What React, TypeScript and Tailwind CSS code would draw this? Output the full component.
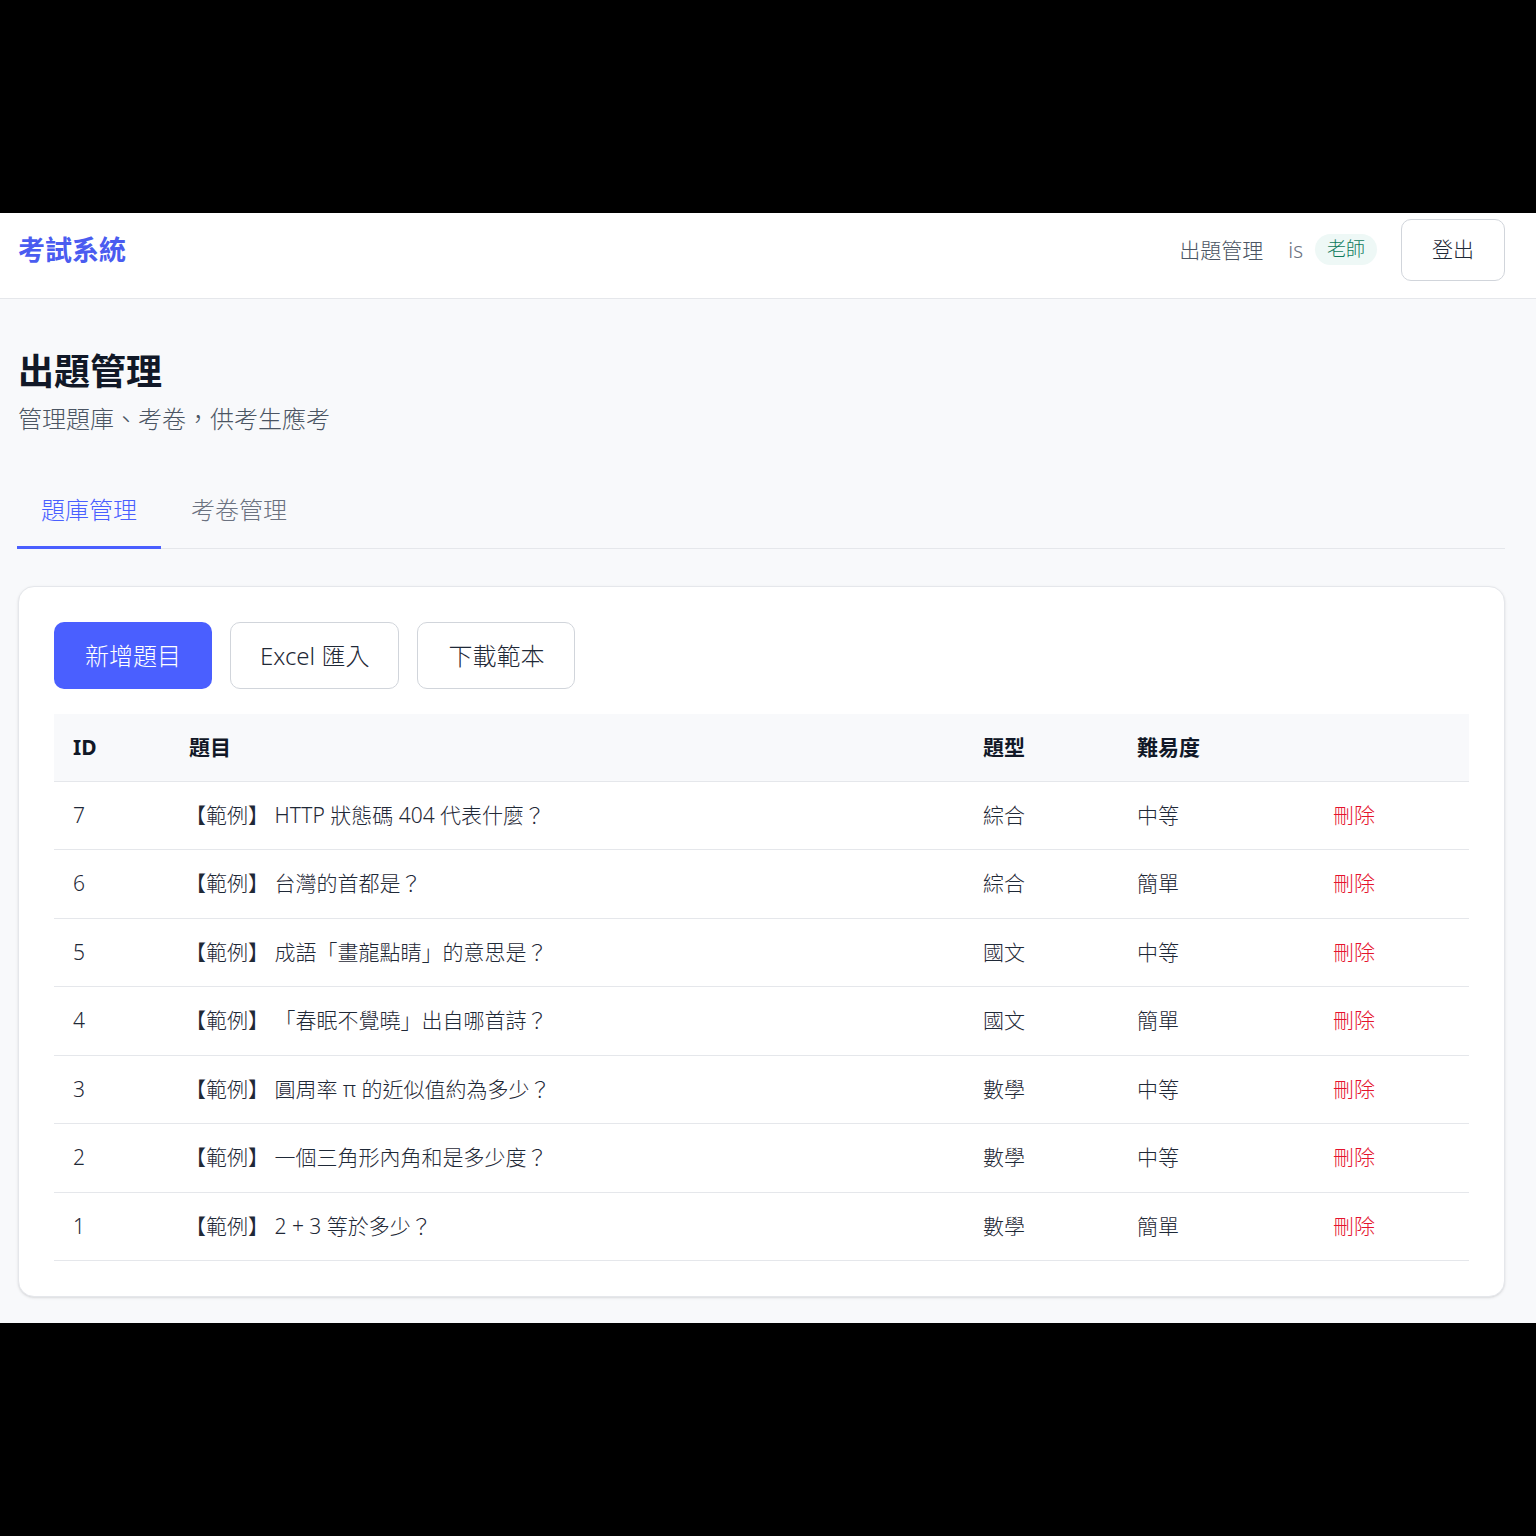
const FONT = {
  fontFamily: '"Segoe UI", "Noto Sans", "Noto Sans CJK TC", sans-serif',
};

const QUESTIONS = [
  { id: 7, title: 'HTTP 狀態碼 404 代表什麼？', type: '綜合', level: '中等' },
  { id: 6, title: '台灣的首都是？', type: '綜合', level: '簡單' },
  { id: 5, title: '成語「畫龍點睛」的意思是？', type: '國文', level: '中等' },
  { id: 4, title: '「春眠不覺曉」出自哪首詩？', type: '國文', level: '簡單' },
  { id: 3, title: '圓周率 π 的近似值約為多少？', type: '數學', level: '中等' },
  { id: 2, title: '一個三角形內角和是多少度？', type: '數學', level: '中等' },
  { id: 1, title: '2 + 3 等於多少？', type: '數學', level: '簡單' },
];

export default function App() {
  return (
    <div className="h-[1536px] bg-black flex flex-col justify-center font-light" style={FONT}>
      <div className="h-[1110px] bg-[#f8f9fb] flex flex-col">
        {/* Top bar */}
        <header className="h-[86px] shrink-0 bg-white border-b border-[#e5e7eb] flex items-center justify-between pl-[18px] pr-[31px] pb-[12px]">
          <div className="text-[27px] leading-[36px] font-bold text-[#4a5cf0]">考試系統</div>
          <div className="flex items-center">
            <span className="text-[21px] leading-[28px] text-[#4b5563]">出題管理</span>
            <span className="ml-[25px] text-[21px] leading-[28px] text-[#6b7280]">is</span>
            <span className="ml-[12px] px-[12px] h-[31px] flex items-center rounded-full bg-[#eef8f6] text-[19px] text-[#0f7a5c]">
              老師
            </span>
            <button className="ml-[24px] w-[104px] h-[62px] rounded-[10px] border border-[#d1d5db] bg-white text-[21px] text-[#1f2937]">
              登出
            </button>
          </div>
        </header>

        <main className="pl-[18px] pr-[31px] pt-[49px]">
          <h1 className="text-[36px] leading-[48px] font-bold text-[#111827]">出題管理</h1>
          <p className="mt-[7px] text-[24px] leading-[32px] text-[#4b5563]">管理題庫、考卷，供考生應考</p>

          {/* Tabs */}
          <div className="mt-[41px] flex gap-[6px] border-b border-[#e5e7eb] -ml-px">
            <button className="px-[24px] pt-[18px] pb-[20px] -mb-px border-b-[3px] border-[#4a5fff] text-[24px] leading-[32px] text-[#4a5fff]">
              題庫管理
            </button>
            <button className="px-[24px] pt-[18px] pb-[20px] -mb-px border-b-[3px] border-transparent text-[24px] leading-[32px] text-[#6b7280]">
              考卷管理
            </button>
          </div>

          {/* Card */}
          <div className="mt-[37px] bg-white rounded-[16px] border border-[#e5e7eb] shadow-sm p-[35px]">
            <div className="flex gap-[18px]">
              <button className="h-[67px] px-[31px] rounded-[10px] bg-[#4a5fff] text-white text-[24px]">新增題目</button>
              <button className="h-[67px] px-[29px] rounded-[10px] border border-[#d1d5db] bg-white text-[#1f2937] text-[24px]">
                Excel 匯入
              </button>
              <button className="h-[67px] px-[30px] rounded-[10px] border border-[#d1d5db] bg-white text-[#1f2937] text-[24px]">
                下載範本
              </button>
            </div>

            <table className="mt-[25px] w-full table-fixed border-collapse text-[21px] text-left">
              <colgroup>
                <col className="w-[116px]" />
                <col className="w-[794px]" />
                <col className="w-[154px]" />
                <col className="w-[196px]" />
                <col />
              </colgroup>
              <thead>
                <tr className="h-[67px] bg-[#f8f9fb] border-b border-[#e5e7eb] text-[#111827]">
                  <th className="px-[19px] font-bold">ID</th>
                  <th className="px-[19px] font-bold">題目</th>
                  <th className="px-[19px] font-bold">題型</th>
                  <th className="px-[19px] font-bold">難易度</th>
                  <th className="px-[19px]"></th>
                </tr>
              </thead>
              <tbody>
                {QUESTIONS.map(q => (
                  <tr key={q.id} className="h-[68.5px] border-b border-[#e5e7eb] text-[#1f2937]">
                    <td className="px-[19px]">{q.id}</td>
                    <td className="px-[19px] whitespace-nowrap">
                      <span className="-ml-[4px]">【範例】</span> {q.title}
                    </td>
                    <td className="px-[19px]">{q.type}</td>
                    <td className="px-[19px]">{q.level}</td>
                    <td className="px-[19px]">
                      <button className="text-[#e5142e]">刪除</button>
                    </td>
                  </tr>
                ))}
              </tbody>
            </table>
          </div>
        </main>
      </div>
    </div>
  );
}
